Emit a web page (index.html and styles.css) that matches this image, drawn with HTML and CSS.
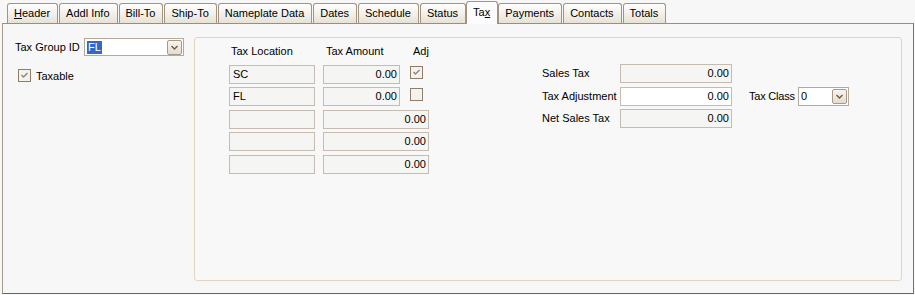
FILE: index.html
```html
<!DOCTYPE html>
<html lang="en">
<head>
    <meta charset="UTF-8">
    <title>Order - Tax</title>
    <link rel="stylesheet" href="styles.css">
</head>
<body>
    <div class="tabs">
        <div class="tab"><u>H</u>eader</div>
        <div class="tab">Addl Info</div>
        <div class="tab">Bill-To</div>
        <div class="tab">Ship-To</div>
        <div class="tab">Nameplate Data</div>
        <div class="tab">Dates</div>
        <div class="tab">Schedule</div>
        <div class="tab">Status</div>
        <div class="tab active">Ta<u>x</u></div>
        <div class="tab">Payments</div>
        <div class="tab">Contacts</div>
        <div class="tab">Totals</div>
    </div>

    <div class="panel">
        <div class="left">
            <div class="field-row">
                <span class="lbl-group">Tax Group ID</span>
                <div class="combo combo-group">
                    <span class="sel">FL</span>
                    <span class="drop"><svg width="13" height="13" viewBox="0 0 13 13"><polyline points="3.5,5 6.5,8 9.5,5" fill="none" stroke="#6e5c49" stroke-width="1.4"/></svg></span>
                </div>
            </div>
            <div class="check-row">
                <span class="check"><svg width="11" height="11" viewBox="0 0 11 11"><polyline points="2.5,5 4.5,7 8.5,3" fill="none" stroke="#8a8580" stroke-width="1.4"/></svg></span>
                Taxable
            </div>
        </div>

        <div class="group">
            <div class="loc-grid">
                <div class="hdr hdr-loc">Tax Location</div>
                <div class="hdr hdr-amt">Tax Amount</div>
                <div class="hdr hdr-adj">Adj</div>

                <div class="box">SC</div>
                <div class="box num">0.00</div>
                <span class="check adj"><svg width="11" height="11" viewBox="0 0 11 11"><polyline points="2.5,5 4.5,7 8.5,3" fill="none" stroke="#8a8580" stroke-width="1.4"/></svg></span>

                <div class="box">FL</div>
                <div class="box num">0.00</div>
                <span class="check adj"></span>

                <div class="box"></div>
                <div class="box num wide">0.00</div>

                <div class="box"></div>
                <div class="box num wide">0.00</div>

                <div class="box"></div>
                <div class="box num wide">0.00</div>
            </div>

            <div class="totals">
                <span class="lbl">Sales Tax</span>
                <div class="box num">0.00</div>
                <span></span>

                <span class="lbl">Tax Adjustment</span>
                <div class="box num edit">0.00</div>
                <div class="tax-class">
                    <span class="lbl lbl-class">Tax Class</span>
                    <div class="combo combo-class">
                        <span>0</span>
                        <span class="drop"><svg width="13" height="13" viewBox="0 0 13 13"><polyline points="3.5,5 6.5,8 9.5,5" fill="none" stroke="#6e5c49" stroke-width="1.4"/></svg></span>
                    </div>
                </div>

                <span class="lbl">Net Sales Tax</span>
                <div class="box num">0.00</div>
                <span></span>
            </div>
        </div>
    </div>
</body>
</html>
```

FILE: styles.css
```css
body {
    margin: 0;
    background-color: #f7f7f7;
    font-family: "Liberation Sans", Arial, sans-serif;
    font-size: 11px;
    color: #000;
}
.tabs {
    display: flex;
    align-items: flex-end;
    gap: 1px;
    height: 23px;
    padding-left: 7px;
}
.tab {
    box-sizing: border-box;
    height: 20px;
    padding: 0 7px 0 6px;
    line-height: 18px;
    border: 1px solid #a39381;
    border-bottom: none;
    border-radius: 3px 3px 0 0;
    background: linear-gradient(#fefefd, #f1eee7 60%, #e7e1d5);
}
.tab.active {
    position: relative;
    z-index: 1;
    height: 23px;
    margin: 0 -1px -1px;
    line-height: 20px;
    background: #fcfcfe;
}
.panel {
    box-sizing: border-box;
    display: flex;
    height: 271px;
    margin: 0 1px 0 2px;
    padding: 13px 11px 12px 12px;
    border: 1px solid #8d7d6c;
    border-color: #9c8d7d #7f6f5e #75654f #a8998a;
    background-color: #f7f7f7;
}
.left {
    flex: none;
    width: 179px;
    padding-top: 1px;
}
.field-row {
    display: flex;
    align-items: center;
}
.lbl-group {
    width: 69px;
}
.combo {
    box-sizing: border-box;
    display: flex;
    align-items: center;
    padding-left: 2px;
    border: 1px solid #b5a99b;
    background-color: #fff;
}
.combo-group {
    width: 100px;
    height: 18px;
}
.combo-class {
    width: 51px;
    height: 19px;
}
.sel {
    padding: 0 1px;
    line-height: 13px;
    background-color: #316ac5;
    color: #fff;
}
.drop {
    box-sizing: border-box;
    display: flex;
    align-items: center;
    justify-content: center;
    width: 15px;
    height: 15px;
    margin-left: auto;
    margin-right: 1px;
    border: 1px solid #a99a86;
    border-radius: 2px;
    background: linear-gradient(#f8f5ef, #e4dccf);
}
.check-row {
    display: flex;
    align-items: center;
    gap: 5px;
    margin-top: 13px;
    padding-left: 3px;
}
.check {
    box-sizing: border-box;
    display: flex;
    align-items: center;
    justify-content: center;
    width: 13px;
    height: 13px;
    border: 1px solid #8f7d69;
    background-color: #f4f2ee;
}
.group {
    flex: 1;
    display: flex;
    padding: 7px 0 0 34px;
    border: 1px solid #e3d4c2;
    border-radius: 3px;
    background-color: #f8f8f8;
}
.loc-grid {
    display: grid;
    grid-template-columns: 86px 77px 21px;
    grid-template-rows: 16px repeat(5, 19px);
    column-gap: 8px;
    row-gap: 3.5px;
    align-content: start;
}
.hdr {
    line-height: 12px;
}
.hdr-loc {
    padding-left: 2px;
}
.hdr-amt {
    padding-left: 3px;
}
.hdr-adj {
    padding-left: 5px;
}
.box {
    box-sizing: border-box;
    height: 19px;
    padding: 0 3px;
    line-height: 17px;
    border: 1px solid #c5bbb0;
    background-color: #f5f5f4;
}
.num {
    text-align: right;
    padding-right: 2px;
}
.wide {
    grid-column: 2 / span 2;
}
.adj {
    margin: 1px 0 0 2px;
}
.totals {
    display: grid;
    grid-template-columns: 78px 112px auto;
    grid-template-rows: repeat(3, 19px);
    row-gap: 3.5px;
    align-content: start;
    margin: 19px 0 0 113px;
}
.lbl {
    line-height: 19px;
}
.edit {
    background-color: #fff;
}
.tax-class {
    display: flex;
    margin-left: 17px;
}
.lbl-class {
    width: 49px;
    letter-spacing: -0.2px;
}
```
